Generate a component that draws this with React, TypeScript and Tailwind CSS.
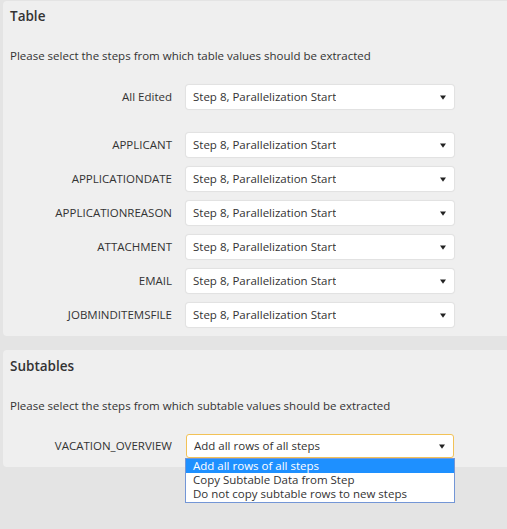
import { useState } from 'react';

const STEP = 'Step 8, Parallelization Start';

const fields = [
  'APPLICANT',
  'APPLICATIONDATE',
  'APPLICATIONREASON',
  'ATTACHMENT',
  'EMAIL',
  'JOBMINDITEMSFILE',
];

const subOptions = [
  'Add all rows of all steps',
  'Copy Subtable Data from Step',
  'Do not copy subtable rows to new steps',
];

function Arrow() {
  return (
    <svg width="6" height="5" viewBox="0 0 6 5" className="shrink-0">
      <path d="M0 0.5 H6 L3 4.8 Z" fill="#222" />
    </svg>
  );
}

function Select({ value, focused = false }: { value: string; focused?: boolean }) {
  return (
    <div
      className={`w-[268px] h-[24px] flex items-center justify-between pl-[7px] pr-[8px] bg-white rounded-[3px] text-[11.5px] text-[#333] ${
        focused
          ? 'border border-[#f2c257]'
          : 'shadow-[0_0_1px_1px_rgba(0,0,0,0.06)]'
      }`}
    >
      <span className="truncate">{value}</span>
      <Arrow />
    </div>
  );
}

function Row({ label, children }: { label: string; children: React.ReactNode }) {
  return (
    <div className="flex items-center">
      <div className="w-[162px] text-right text-[11.5px] text-[#333]">{label}</div>
      <div className="ml-[14px] relative">{children}</div>
    </div>
  );
}

export default function App() {
  const [active] = useState(0);

  return (
    <div
      className="min-h-[529px] bg-[#e4e4e4] pt-[1px] pl-[3px]"
      style={{ fontFamily: '"Open Sans", "Noto Sans", sans-serif' }}
    >
      <section className="bg-[#efefef] rounded-l-[4px] pl-[7px] pt-[5px] pb-[9px]">
        <h2 className="text-[13.5px] leading-[20px] font-semibold text-[#333]">Table</h2>
        <p className="mt-[21px] text-[11.5px] leading-[18px] text-[#333]">
          Please select the steps from which table values should be extracted
        </p>
        <div className="mt-[20px]">
          <Row label="All Edited">
            <Select value={STEP} />
          </Row>
        </div>
        <div className="mt-[24px] flex flex-col gap-[10px]">
          {fields.map((f) => (
            <Row key={f} label={f}>
              <Select value={STEP} />
            </Row>
          ))}
        </div>
      </section>

      <section className="mt-[14px] bg-[#efefef] rounded-l-[4px] pl-[7px] pt-[6px] pb-[9px]">
        <h2 className="text-[13.5px] leading-[20px] font-semibold text-[#333]">Subtables</h2>
        <p className="mt-[21px] text-[11.5px] leading-[18px] text-[#333]">
          Please select the steps from which subtable values should be extracted
        </p>
        <div className="mt-[19px]">
          <Row label="VACATION_OVERVIEW">
            <Select value={subOptions[active]} focused />
            <ul className="absolute left-[-1px] top-[24px] w-[270px] bg-white border border-[#7396d6] pb-[1px] z-10">
              {subOptions.map((o, i) => (
                <li
                  key={o}
                  className={`h-[14px] leading-[14px] pl-[7px] text-[11.5px] ${
                    i === active ? 'bg-[#1e90ff] text-white' : 'text-[#333]'
                  }`}
                >
                  {o}
                </li>
              ))}
            </ul>
          </Row>
        </div>
      </section>
    </div>
  );
}
